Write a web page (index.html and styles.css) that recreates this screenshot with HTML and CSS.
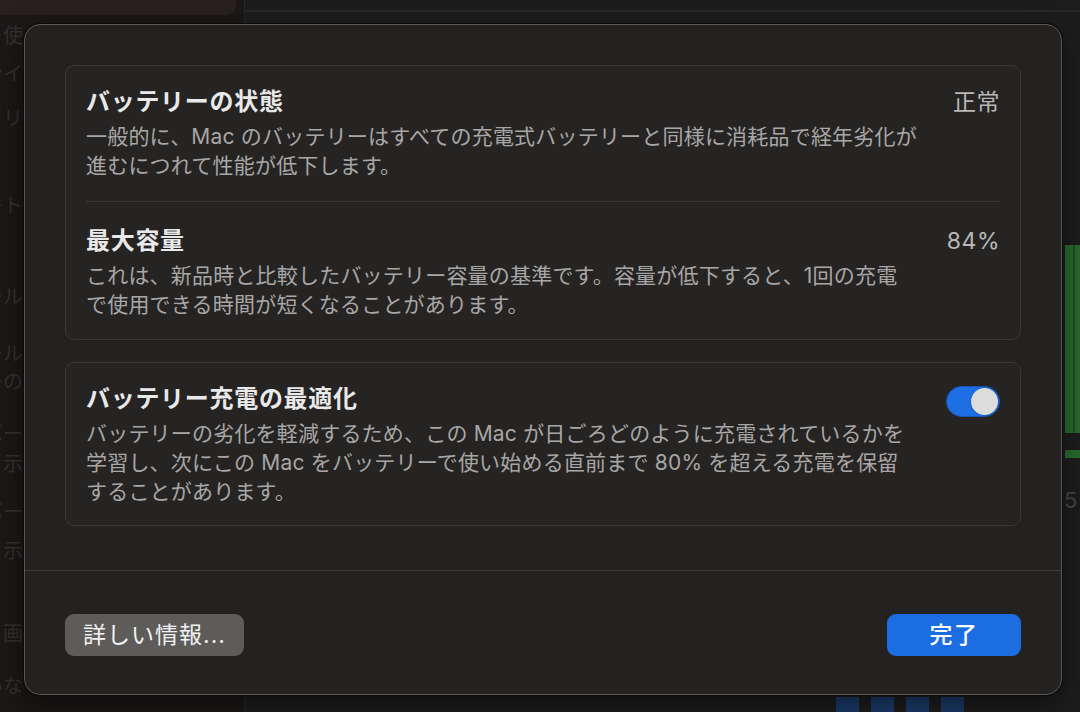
FILE: index.html
```html
<!DOCTYPE html>
<html lang="ja">
<head>
<meta charset="utf-8">
<title>バッテリーの状態</title>
<link rel="stylesheet" href="styles.css">
</head>
<body>
<div class="backdrop">
  <div class="bd-left"></div>
  <div class="bd-warm"></div>
  <div class="bd-topline"></div>
  <div class="side-text">
    <span class="st" style="top:22px">ー使</span>
    <span class="st" style="top:60px">ンイ</span>
    <span class="st" style="top:105px">トリ</span>
    <span class="st" style="top:192px">ート</span>
    <span class="st" style="top:283px">ール</span>
    <span class="st" style="top:340px">ール</span>
    <span class="st" style="top:368px">ーの</span>
    <span class="st" style="top:420px">バー</span>
    <span class="st" style="top:450px">示</span>
    <span class="st" style="top:498px">バー</span>
    <span class="st" style="top:537px">示</span>
    <span class="st" style="top:620px">画</span>
    <span class="st" style="top:672px">いな</span>
  </div>
  <div class="green-bar"></div>
  <div class="green-strip"></div>
  <div class="right-num">5</div>
  <div class="blue-row">
    <span class="blue-sq"></span><span class="blue-sq"></span><span class="blue-sq"></span><span class="blue-sq"></span>
  </div>
</div>

<div class="dialog">
  <div class="content">
    <section class="card">
      <div class="row first">
        <div class="text">
          <h2 class="title">バッテリーの状態</h2>
          <p class="desc">一般的に、Mac のバッテリーはすべての充電式バッテリーと同様に消耗品で経年劣化が<br>進むにつれて性能が低下します。</p>
        </div>
        <div class="value">正常</div>
      </div>
      <div class="divider"></div>
      <div class="row second">
        <div class="text">
          <h2 class="title">最大容量</h2>
          <p class="desc">これは、新品時と比較したバッテリー容量の基準です。容量が低下すると、1回の充電<br>で使用できる時間が短くなることがあります。</p>
        </div>
        <div class="value">84%</div>
      </div>
    </section>

    <section class="card card-opt">
      <div class="row single">
        <div class="text">
          <h2 class="title">バッテリー充電の最適化</h2>
          <p class="desc">バッテリーの劣化を軽減するため、この Mac が日ごろどのように充電されているかを<br>学習し、次にこの Mac をバッテリーで使い始める直前まで 80% を超える充電を保留<br>することがあります。</p>
        </div>
        <div class="toggle" role="switch" aria-checked="true"><span class="knob"></span></div>
      </div>
    </section>
  </div>
  <div class="footer">
    <button class="btn btn-secondary">詳しい情報...</button>
    <button class="btn btn-primary">完了</button>
  </div>
</div>
</body>
</html>
```
FILE: styles.css
```css
* { box-sizing: border-box; }
html, body { margin: 0; padding: 0; }
body {
  width: 1080px;
  height: 712px;
  overflow: hidden;
  position: relative;
  background: #1d1d1d;
  font-family: Inter, "Noto Sans CJK JP", "Noto Sans", sans-serif;
  color: #e6e6e6;
}

/* ---------- backdrop (windows underneath) ---------- */
.backdrop { position: absolute; inset: 0; }
.bd-left {
  position: absolute; left: 0; top: 0; width: 245px; height: 712px;
  background: #1b1817;
  border-right: 1px solid #2a2827;
}
.bd-warm {
  position: absolute; left: 0; top: 0; width: 236px; height: 15px;
  background: #272120;
  border-bottom-right-radius: 10px;
}
.bd-topline {
  position: absolute; left: 246px; top: 10px; right: 0; height: 2px;
  background: #2a2a2a;
}
.side-text {
  position: absolute; left: 0; top: 0; width: 23px; height: 712px;
  overflow: hidden;
}
.st {
  position: absolute; right: 0;
  font-family: "Noto Sans CJK JP", sans-serif;
  font-size: 20px; line-height: 26px;
  color: #353130;
  white-space: nowrap;
}
.green-bar {
  position: absolute; left: 1065px; top: 245px; width: 15px; height: 188px;
  background: linear-gradient(90deg, #2a6c30 0, #2a6c30 8px, #1e4f23 8px, #1e4f23 10px, #2a6c30 10px);
}
.green-strip {
  position: absolute; left: 1065px; top: 450px; width: 15px; height: 8px;
  background: #2a6c30;
}
.right-num {
  position: absolute; left: 1064px; top: 486px;
  font-size: 22px; line-height: 28px; color: #474747;
}
.blue-row {
  position: absolute; left: 836px; top: 697px;
  display: flex; gap: 12px;
}
.blue-sq { width: 23px; height: 15px; background: #1b3c6b; }

/* ---------- dialog ---------- */
.dialog {
  position: absolute;
  left: 24px; top: 24px;
  width: 1038px; height: 671px;
  background: #242221;
  border: 1px solid #5b5958;
  border-radius: 16px;
  box-shadow: 0 0 0 1px #0b0a0a, 0 10px 30px rgba(0,0,0,0.5);
  display: flex;
  flex-direction: column;
  overflow: hidden;
}
.content {
  flex: 1;
  padding: 40px 40px 0;
}
.card {
  background: #262423;
  border: 1px solid #3a3837;
  border-radius: 9px;
  padding: 0 20px;
}
.card-opt { margin-top: 22px; }

.row {
  display: flex;
  align-items: flex-start;
  gap: 20px;
}
.row.first { padding: 21px 0 21px; }
.row.second { padding: 24px 0 20px; }
.row.single { padding: 21px 0 19px; }
.divider { height: 1px; background: #3a3837; }

.text { flex: 1; min-width: 0; }
.title {
  margin: 0 0 5px;
  font-size: 24px;
  line-height: 30px;
  font-weight: 600;
  color: #e9e9e9;
  letter-spacing: 0.7px;
}
.desc {
  margin: 0;
  font-size: 21px;
  line-height: 29px;
  font-weight: 400;
  color: #a8a7a6;
  white-space: nowrap;
  letter-spacing: 0.2px;
}
.value {
  flex: none;
  font-size: 23px;
  line-height: 30px;
  color: #b9b8b7;
  letter-spacing: 0.5px;
}

.toggle {
  flex: none;
  margin-top: 2px;
  width: 54px; height: 31px;
  border-radius: 16px;
  background: #1e6ee4;
  border: 1px solid #1656b8;
  position: relative;
}
.knob {
  position: absolute;
  right: 1px; top: 1px;
  width: 27px; height: 27px;
  border-radius: 50%;
  background: #dcdcdc;
  box-shadow: 0 0 2px rgba(0,0,0,0.35);
}

/* ---------- footer ---------- */
.footer {
  flex: none;
  border-top: 1px solid #3c3a39;
  padding: 43px 40px 38px;
  display: flex;
  justify-content: space-between;
}
.btn {
  height: 42px;
  border: none;
  border-radius: 9px;
  font-family: Inter, "Noto Sans CJK JP", "Noto Sans", sans-serif;
  font-size: 23px;
  line-height: 42px;
  padding: 0;
  color: #f2f2f2;
  letter-spacing: 1px;
}
.btn-secondary {
  width: 179px;
  background: #5e5c5b;
}
.btn-primary {
  width: 134px;
  background: #1d6de2;
  color: #ffffff;
  font-weight: 500;
  letter-spacing: 1.5px;
}
```
